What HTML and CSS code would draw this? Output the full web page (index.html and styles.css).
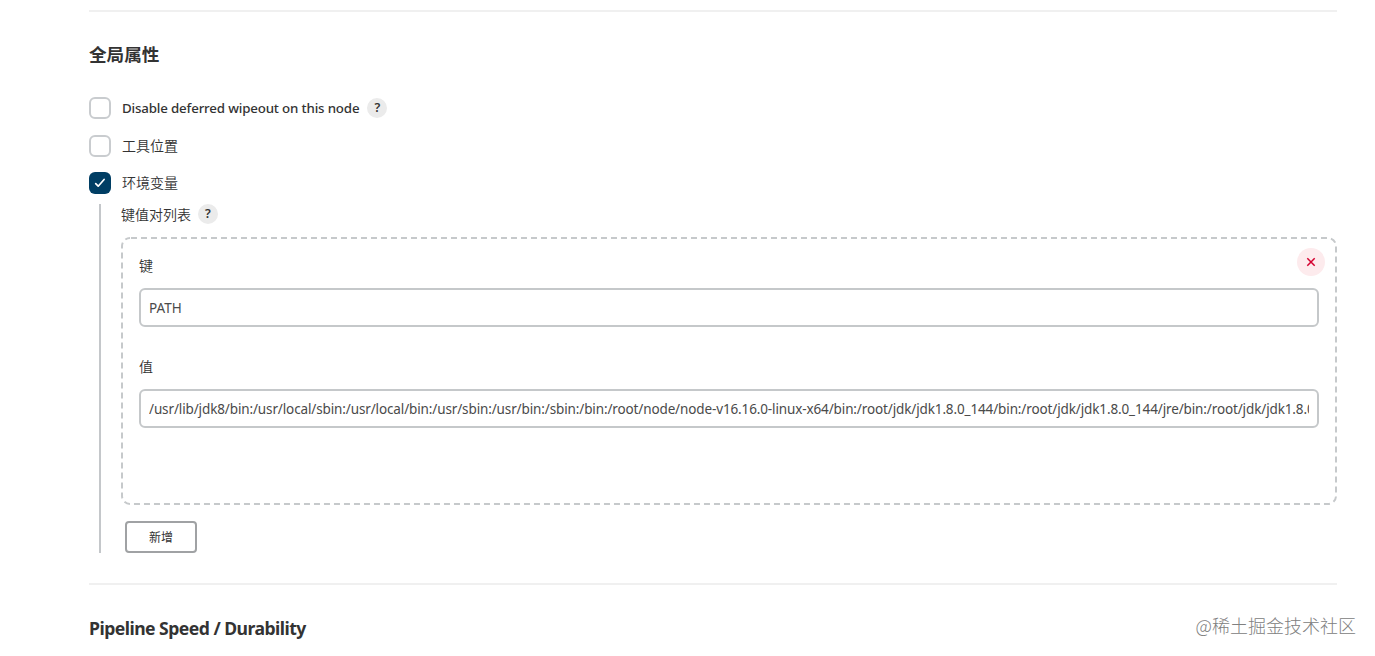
FILE: index.html
```html
<!DOCTYPE html>
<html lang="zh-CN">
<head>
  <meta charset="UTF-8">
  <title>系统配置</title>
  <meta name="viewport" content="width=device-width, initial-scale=1.0">
  <link rel="stylesheet" href="styles.css">
</head>
<body>

<main class="config">
  <section class="section">
    <h2 class="section-title">全局属性</h2>

    <div class="option">
      <span class="checkbox"></span>
      <span class="option-label option-label-en">Disable deferred wipeout on this node</span>
      <span class="help">?</span>
    </div>
    <div class="option">
      <span class="checkbox"></span>
      <span class="option-label">工具位置</span>
    </div>
    <div class="option">
      <span class="checkbox checked">
        <svg width="22" height="22" viewBox="0 0 22 22" fill="none" stroke="#fff" stroke-width="1.7" stroke-linecap="round" stroke-linejoin="round"><path d="M6.7 11.6l2.5 2.6 5.9-6.7"/></svg>
      </span>
      <span class="option-label">环境变量</span>
    </div>

    <div class="nested">
      <div class="list-label">
        <span>键值对列表</span>
        <span class="help">?</span>
      </div>

      <div class="pair">
        <svg class="pair-border" width="1216" height="268"><rect x="1" y="1" width="1214" height="266" rx="8"/></svg>
        <button class="delete">
          <svg width="28" height="28" viewBox="0 0 28 28" fill="none" stroke="#d4002f" stroke-width="1.5"><path d="M10.3 10.3l7.4 7.4M17.7 10.3l-7.4 7.4"/></svg>
        </button>
        <label class="field-label">键</label>
        <div class="field"><span class="value value-key">PATH</span></div>
        <label class="field-label">值</label>
        <div class="field"><span class="value">/usr/lib/jdk8/bin:/usr/local/sbin:/usr/local/bin:/usr/sbin:/usr/bin:/sbin:/bin:/root/node/node-v16.16.0-linux-x64/bin:/root/jdk/jdk1.8.0_144/bin:/root/jdk/jdk1.8.0_144/jre/bin:/root/jdk/jdk1.8.0</span></div>
      </div>

      <button class="add">新增</button>
    </div>
  </section>

  <section class="section section-next">
    <h2 class="section-title section-title-en">Pipeline Speed / Durability</h2>
  </section>
</main>

<div class="watermark">@稀土掘金技术社区</div>

</body>
</html>
```
FILE: styles.css
```css
* {
  box-sizing: border-box;
}
body {
  margin: 0;
  height: 656px;
  overflow: hidden;
  background-color: #fff;
  color: #333;
  font-family: "Noto Sans", "Noto Sans CJK SC", sans-serif;
  font-size: 14px;
}
.config {
  width: 1248px;
  margin: 10px 0 0 89px;
}
.section {
  border-top: 2px solid #f0f0f0;
  padding-top: 28px;
}
.section-next {
  padding-top: 29px;
}
.section-title {
  margin: 0 0 29px;
  height: 28px;
  line-height: 28px;
  font-size: 17.6px;
  font-weight: 700;
  white-space: nowrap;
}
.section-title-en {
  letter-spacing: -0.53px;
}
.option {
  display: flex;
  align-items: center;
  height: 22px;
  margin-bottom: 15.5px;
}
.checkbox {
  width: 22px;
  height: 22px;
  margin-right: 11px;
  border: 2px solid #c9cccf;
  border-radius: 6px;
}
.checkbox.checked {
  border: none;
  background-color: #003e64;
}
.checkbox svg {
  display: block;
}
.option-label,
.list-label,
.field-label {
  font-family: "Noto Sans CJK SC", sans-serif;
  font-weight: 350;
  line-height: 22px;
  white-space: nowrap;
}
.option-label {
  padding-bottom: 2px;
}
.option-label-en {
  padding-bottom: 0;
  font-family: "Noto Sans", sans-serif;
  font-size: 13.3px;
  font-weight: 500;
  letter-spacing: -0.16px;
}
.help {
  width: 20px;
  height: 20px;
  margin-left: 8px;
  border-radius: 50%;
  background-color: #ebebeb;
  font-family: "Noto Sans", sans-serif;
  font-size: 12.5px;
  font-weight: 600;
  line-height: 20px;
  text-align: center;
}
.list-label .help {
  margin-left: 7px;
}
.nested {
  height: 349px;
  margin: -6px 0 30px 10px;
  padding-left: 20px;
  border-left: 2px solid #c4c7ca;
}
.list-label {
  display: flex;
  align-items: center;
  height: 20px;
  margin-bottom: 13px;
}
.pair {
  position: relative;
  height: 268px;
  padding: 18px;
}
.pair-border {
  position: absolute;
  top: 0;
  left: 0;
  fill: none;
  stroke: #c6c9cb;
  stroke-width: 2;
  stroke-dasharray: 6 4;
  stroke-dashoffset: -1;
}
.delete {
  position: absolute;
  top: 11px;
  right: 12px;
  width: 28px;
  height: 28px;
  padding: 0;
  border: none;
  border-radius: 50%;
  background-color: #fdebed;
}
.delete svg {
  display: block;
}
.field-label {
  display: block;
  height: 22px;
  margin-bottom: 11px;
  line-height: 20px;
}
.field {
  height: 39px;
  margin-bottom: 29px;
  padding: 0 8px;
  border: 2px solid #c5c8ca;
  border-radius: 6px;
}
.value {
  display: block;
  overflow: hidden;
  color: #4a4a4a;
  font-size: 13.5px;
  letter-spacing: -0.125px;
  line-height: 36px;
  white-space: nowrap;
}
.value-key {
  letter-spacing: 0;
}
.add {
  display: block;
  width: 72px;
  height: 32px;
  margin: 16px 0 0 4px;
  padding: 0;
  border: 2px solid #a0a2a4;
  border-radius: 4px;
  background-color: #fff;
  color: #333;
  font-family: inherit;
  font-size: 12px;
  font-weight: 400;
}
.watermark {
  position: absolute;
  right: 19px;
  bottom: 17px;
  color: #808080;
  font-family: "Noto Sans CJK SC", sans-serif;
  font-size: 18px;
  font-weight: 300;
  line-height: 28px;
  white-space: nowrap;
}
```
